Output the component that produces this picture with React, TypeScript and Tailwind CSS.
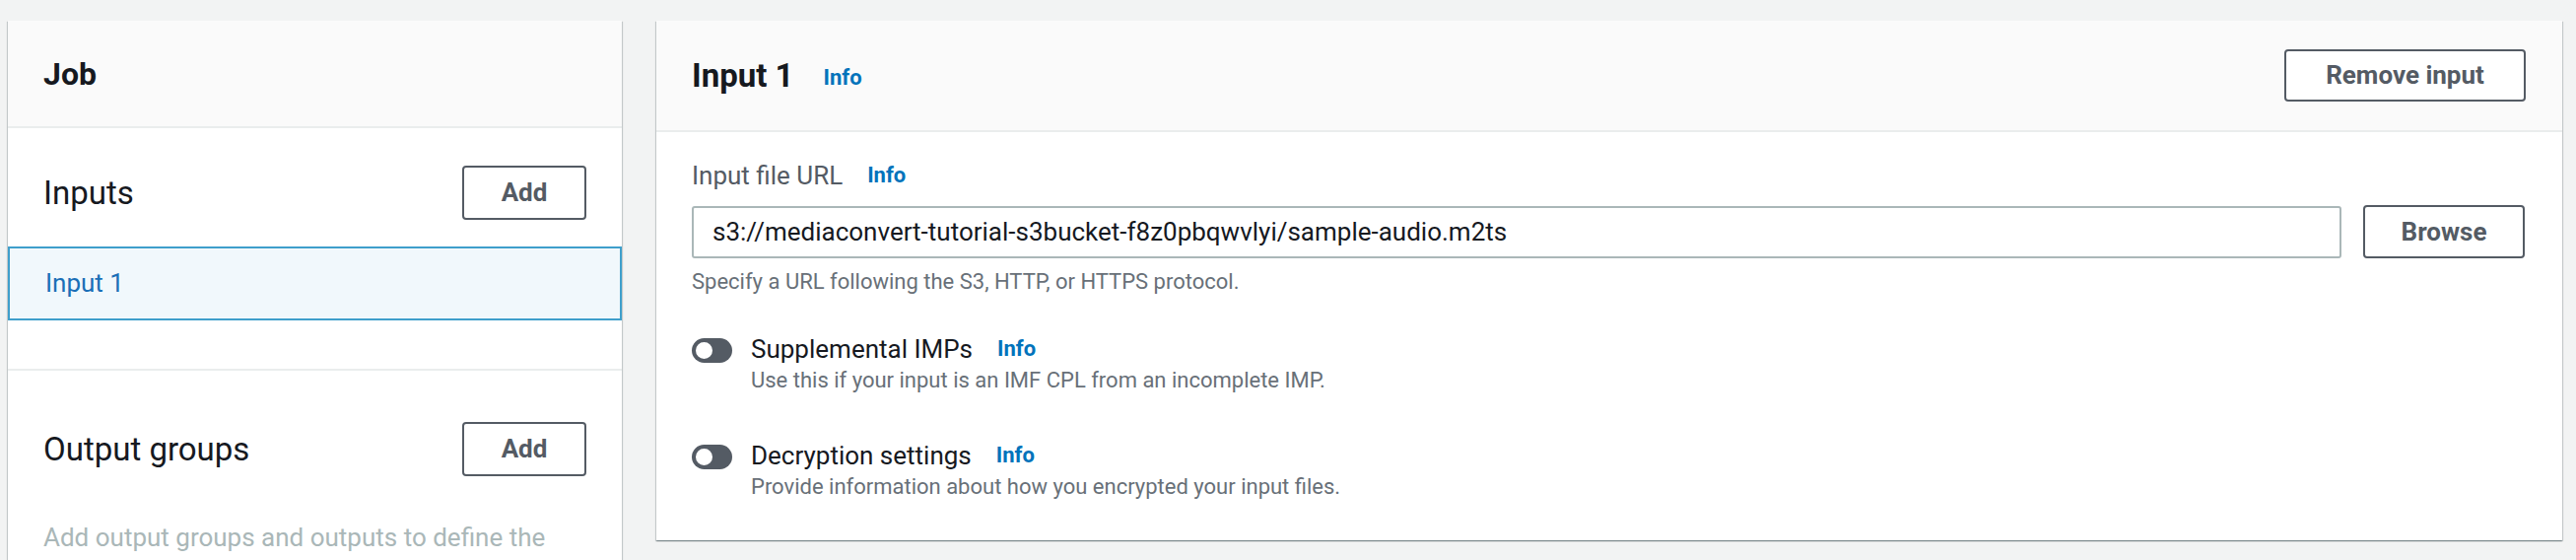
function InfoLink() {
  return (
    <a className="ml-[25px] text-[22px] font-bold text-[#0073bb] leading-none">Info</a>
  )
}

function OutlineButton({ label, className }: { label: string; className: string }) {
  return (
    <button
      className={`rounded-[4px] border-2 border-[#545b64] bg-white text-[26px] font-bold text-[#545b64] ${className}`}
    >
      {label}
    </button>
  )
}

function Toggle() {
  return (
    <div className="relative mt-[5px] h-[25px] w-[41px] shrink-0 rounded-full bg-[#545b64]">
      <div className="absolute left-[1px] top-[1px] h-[23px] w-[23px] rounded-full border-[3px] border-[#545b64] bg-white" />
    </div>
  )
}

function ToggleField({ label, description, className }: { label: string; description: string; className: string }) {
  return (
    <div className={`flex items-start ${className}`}>
      <Toggle />
      <div className="ml-[19px]">
        <div className="flex items-center h-[32px]">
          <span className="text-[26px] text-[#16191f]">{label}</span>
          <InfoLink />
        </div>
        <p className="mt-[2px] text-[22px] leading-[28px] text-[#687078]">{description}</p>
      </div>
    </div>
  )
}

function JobSidebar() {
  return (
    <aside className="w-[623px] shrink-0 self-start h-[600px] bg-white shadow-[0_1px_1px_0_rgba(0,28,36,0.3),1px_1px_1px_0_rgba(0,28,36,0.15),-1px_1px_1px_0_rgba(0,28,36,0.15)]">
      <header className="flex h-[109px] items-center border-b-2 border-[#eaeded] bg-[#fafafa] px-[36px]">
        <h2 className="text-[32px] font-bold text-[#16191f]">Job</h2>
      </header>

      {/* Inputs */}
      <div className="flex items-center justify-between px-[36px] pt-[38px]">
        <h3 className="text-[33px] text-[#16191f]">Inputs</h3>
        <OutlineButton label="Add" className="h-[55px] w-[126px]" />
      </div>
      <div className="mt-[27px] flex h-[75px] items-center border-2 border-[#3f9fcb] bg-[#f1f8fc] px-[36px]">
        <span className="text-[26px] text-[#1a6fb7]">Input 1</span>
      </div>

      <div className="mt-[49px] border-t-2 border-[#eaeded]" />

      {/* Output groups */}
      <div className="flex items-center justify-between px-[36px] pt-[52px]">
        <h3 className="text-[33px] text-[#16191f]">Output groups</h3>
        <OutlineButton label="Add" className="h-[55px] w-[126px]" />
      </div>
      <p className="mt-[44px] px-[36px] text-[26px] leading-[36px] text-[#aab7b8]">
        Add output groups and outputs to define the types of files and settings you want.
      </p>
    </aside>
  )
}

function InputPanel() {
  return (
    <section className="flex-1 self-start bg-white shadow-[0_1px_1px_0_rgba(0,28,36,0.3),1px_1px_1px_0_rgba(0,28,36,0.15),-1px_1px_1px_0_rgba(0,28,36,0.15)]">
      <header className="flex h-[113px] items-center justify-between border-b-2 border-[#eaeded] bg-[#fafafa] pl-[36px] pr-[37px]">
        <div className="flex items-center">
          <h2 className="text-[33px] font-bold text-[#16191f]">Input 1</h2>
          <a className="ml-[30px] mt-[4px] text-[22px] font-bold text-[#0073bb]">Info</a>
        </div>
        <OutlineButton label="Remove input" className="h-[53px] w-[245px]" />
      </header>

      <div className="pl-[36px] pr-[38px] pt-[28px] pb-[40px]">
        {/* Input file URL */}
        <div className="flex h-[32px] items-center">
          <span className="text-[26px] text-[#545b64]">Input file URL</span>
          <InfoLink />
        </div>
        <div className="mt-[14px] flex items-center gap-[22px]">
          <div className="flex h-[53px] flex-1 items-center rounded-[3px] border-2 border-[#aab7b8] px-[19px]">
            <span className="text-[26px] text-[#16191f]">
              s3://mediaconvert-tutorial-s3bucket-f8z0pbqwvlyi/sample-audio.m2ts
            </span>
          </div>
          <OutlineButton label="Browse" className="h-[54px] w-[164px]" />
        </div>
        <p className="mt-[10px] text-[22px] leading-[28px] text-[#687078]">
          Specify a URL following the S3, HTTP, or HTTPS protocol.
        </p>

        <ToggleField
          className="mt-[38px]"
          label="Supplemental IMPs"
          description="Use this if your input is an IMF CPL from an incomplete IMP."
        />
        <ToggleField
          className="mt-[46px]"
          label="Decryption settings"
          description="Provide information about how you encrypted your input files."
        />
      </div>
    </section>
  )
}

export default function App() {
  return (
    <div className="flex h-[568px] gap-[35px] overflow-hidden bg-[#f2f3f3] pl-[8px] pr-[14px] pt-[21px] font-['Roboto','Open_Sans',sans-serif]">
      <JobSidebar />
      <InputPanel />
    </div>
  )
}
